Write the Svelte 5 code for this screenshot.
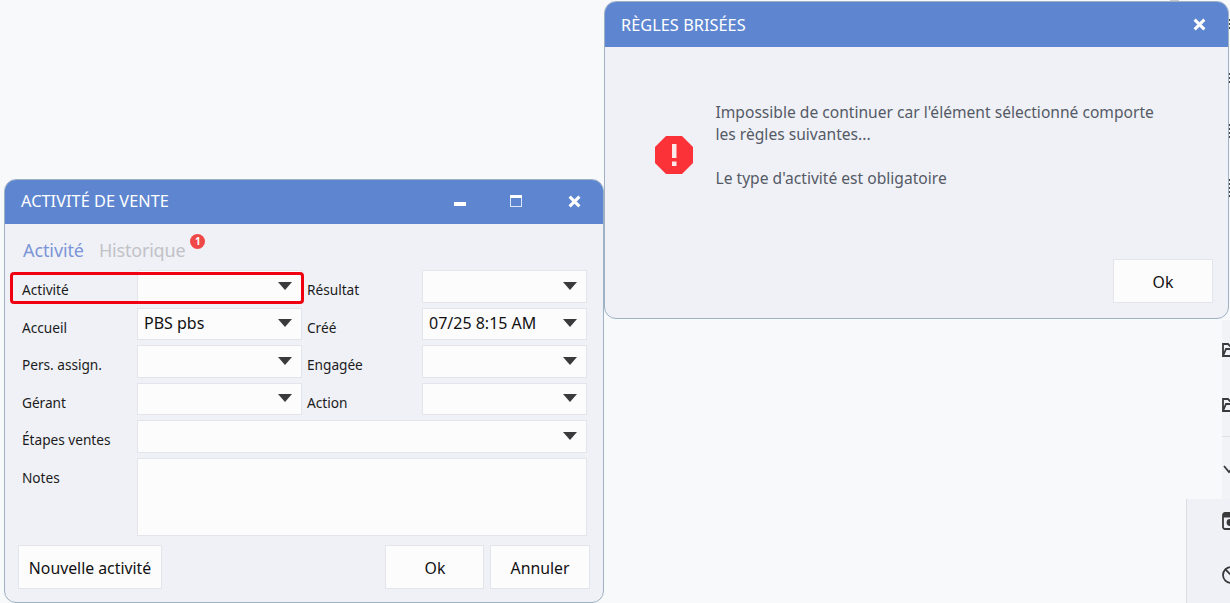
<script>
  const rows = [
    [{ label: 'Activité' }, { label: 'Résultat' }],
    [{ label: 'Accueil', value: 'PBS pbs' }, { label: 'Créé', value: '07/25 8:15 AM' }],
    [{ label: 'Pers. assign.' }, { label: 'Engagée' }],
    [{ label: 'Gérant' }, { label: 'Action' }]
  ];
  const heights = [33, 32, 33, 32, 33];
</script>

<main class="desktop">
  <aside class="rail-top">
    <i></i><i></i><i></i><i></i>
  </aside>
  <span class="top-stub"></span>
  <aside class="rail">
    <div class="rail-light">
      <svg class="rail-icon" style="top: 22px" viewBox="0 0 18 16"><path d="M1 14V2h5l2 2h7v3M1 14h14l2-7H4z" /></svg>
      <svg class="rail-icon" style="top: 77px" viewBox="0 0 18 16"><path d="M1 14V2h5l2 2h7v3M1 14h14l2-7H4z" /></svg>
      <span class="rail-line"></span>
      <svg class="rail-icon" style="top: 142px" viewBox="0 0 18 16"><path d="M2 4l5 6 5-6" /></svg>
    </div>
    <div class="rail-dark">
      <svg class="rail-icon" style="top: 13px" viewBox="0 0 18 18"><rect x="1" y="1" width="16" height="16" rx="2" /><path d="M1 3.5h16" stroke-width="4" /><circle cx="8" cy="10.5" r="2.5" fill="currentColor" /></svg>
      <svg class="rail-icon" style="top: 67px" viewBox="0 0 18 18"><circle cx="9" cy="9" r="8" /><path d="M3 3l12 12" /></svg>
    </div>
  </aside>

  <section class="window sale">
    <header class="titlebar">
      <h2>ACTIVITÉ DE VENTE</h2>
      <div class="controls">
        <svg class="min" viewBox="0 0 12 4"><rect width="12" height="4" /></svg>
        <svg class="max" viewBox="0 0 12 12"><rect x="0.5" y="0.5" width="11" height="11" fill="none" stroke="currentColor" opacity="0.8" /><rect width="12" height="3" /></svg>
        <svg class="close" viewBox="0 0 12 12"><path d="M1.5 1.5l9 9M10.5 1.5l-9 9" /></svg>
      </div>
    </header>
    <div class="body">
      <nav class="tabs">
        <span class="tab active">Activité</span>
        <span class="tab">Historique<b class="badge">1</b></span>
      </nav>
      <div class="form">
        {#each rows as row, i}
          <div class="row" style="height: {heights[i]}px">
            {#each row as f}
              <span class="label">{f.label}</span>
              <div class="select">
                <span>{f.value ?? ''}</span>
                <span class="caret"></span>
              </div>
            {/each}
          </div>
        {/each}
        <div class="row" style="height: {heights[4]}px">
          <span class="label">Étapes ventes</span>
          <div class="select wide"><span></span><span class="caret"></span></div>
        </div>
        <div class="row notes">
          <span class="label">Notes</span>
          <div class="area"></div>
        </div>
      </div>
      <footer class="actions">
        <button class="new">Nouvelle activité</button>
        <button class="std ok">Ok</button>
        <button class="std">Annuler</button>
      </footer>
      <span class="invalid"></span>
    </div>
  </section>

  <section class="window rules">
    <header class="titlebar">
      <h2>RÈGLES BRISÉES</h2>
      <div class="controls">
        <svg class="close" viewBox="0 0 12 12"><path d="M1.5 1.5l9 9M10.5 1.5l-9 9" /></svg>
      </div>
    </header>
    <div class="message">
      <svg class="stop" viewBox="0 0 38 38">
        <path d="M11 0h16l11 11v16L27 38H11L0 27V11z" fill="#fb3237" />
        <rect x="17" y="8" width="4.5" height="14" fill="#fde9ea" />
        <rect x="17" y="25.5" width="4.5" height="4.5" fill="#fde9ea" />
      </svg>
      <div class="text">
        <p>Impossible de continuer car l'élément sélectionné comporte<br />les règles suivantes...</p>
        <p>Le type d'activité est obligatoire</p>
      </div>
    </div>
    <footer class="rules-foot">
      <button class="std">Ok</button>
    </footer>
  </section>
</main>

<style>
  :global(body) {
    margin: 0;
    background: #f8f9fb;
  }

  .desktop {
    position: relative;
    width: 1230px;
    height: 603px;
    overflow: hidden;
    font-family: "Noto Sans", "Open Sans", sans-serif;
    color: #111;
  }

  /* windows sit on a free canvas */
  .window {
    position: absolute;
    box-sizing: border-box;
    display: flex;
    flex-direction: column;
    background: #eff1f6;
    border: 1px solid #9fb2c4;
    border-radius: 12px;
    overflow: hidden;
  }
  .sale { left: 4px; top: 179px; width: 600px; height: 424px; }
  .rules { left: 604px; top: 1px; width: 625px; height: 318px; }

  .titlebar {
    flex: none;
    display: flex;
    align-items: center;
    justify-content: space-between;
    height: 44px;
    padding: 0 15px 0 16px;
    background: #5e86d0;
    color: #fff;
  }
  .rules .titlebar { height: 45px; }
  .sale .titlebar { padding-bottom: 2px; box-sizing: border-box; }
  h2 {
    margin: 0;
    font-size: 16.3px;
    font-weight: 400;
    letter-spacing: 0.05px;
  }
  .controls { display: flex; align-items: center; gap: 45px; padding-right: 7px; }
  .controls svg { display: block; color: #fff; fill: currentColor; }
  .min { width: 12px; height: 4px; margin-top: 6px; }
  .max { width: 12px; height: 12px; margin: 0 1px 0 -1px; }
  .close { width: 13px; height: 13px; stroke: #fff; stroke-width: 2.8; fill: none; }
  .controls .close { fill: none; }

  .body {
    position: relative;
    flex: 1;
    display: flex;
    flex-direction: column;
    padding: 0 13px 13px;
  }
  .tabs {
    display: flex;
    gap: 15px;
    height: 46px;
    padding: 14px 0 0 5px;
    box-sizing: border-box;
    font-size: 18px;
    letter-spacing: -0.1px;
  }
  .tab { position: relative; color: #c2c2c6; }
  .tab + .tab { letter-spacing: -0.2px; }
  .tab.active { color: #7c95d6; }
  .badge {
    position: absolute;
    top: -4px;
    right: -20px;
    width: 15px;
    height: 15px;
    border-radius: 50%;
    background: #f04747;
    color: #fff;
    font-size: 10px;
    font-weight: 700;
    line-height: 15px;
    text-align: center;
    letter-spacing: 0;
  }

  .form { display: flex; flex-direction: column; gap: 5px; }
  .row {
    display: grid;
    grid-template-columns: 119px 165px 120px 165px;
  }
  .label {
    padding: 11px 0 0 4px;
    font-size: 13.7px;
    line-height: 18px;
    letter-spacing: -0.03px;
    color: #1c1c1c;
  }
  .row .label:nth-child(3) { padding-left: 5px; }
  .select, .area {
    box-sizing: border-box;
    background: #fcfcfd;
    border: 1px solid #e3e5ea;
  }
  .select {
    display: flex;
    align-items: center;
    justify-content: space-between;
    padding: 0 9px 2px 6px;
    font-size: 16px;
  }
  .caret {
    width: 0;
    height: 0;
    border: 7px solid transparent;
    border-top: 8px solid #3a3a3c;
    border-bottom: 0;
  }
  .wide, .area { grid-column: 2 / 5; }
  .notes { height: 78px; }
  .notes .label { padding-top: 11px; }

  .actions {
    display: flex;
    align-items: stretch;
    gap: 6px;
    height: 44px;
    margin-top: 9px;
  }
  button {
    box-sizing: border-box;
    background: #fcfcfd;
    border: 1px solid #e3e5ea;
    font: inherit;
    font-size: 15.8px;
    color: #111;
    padding: 1px 0 0;
  }
  .new { width: 144px; margin-right: auto; }
  .std { width: 100px; }
  .ok { width: 99px; padding-left: 1px; }

  .invalid {
    position: absolute;
    left: 5px;
    top: 48px;
    width: 294px;
    height: 32px;
    box-sizing: border-box;
    border: 3px solid #f00010;
    border-radius: 4px;
  }

  .message {
    flex: 1;
    display: flex;
    padding: 54px 0 0 50px;
    font-size: 15.6px;
    line-height: 22px;
    color: #555a66;
  }
  .stop { flex: none; width: 38px; height: 38px; margin: 35px 23px 0 0; }
  .text { margin-left: -0.5px; }
  .text p { margin: 0 0 22px; }
  .rules-foot {
    display: flex;
    justify-content: flex-end;
    height: 44px;
    padding: 0 15px 15px;
    margin-top: -1px;
  }

  .top-stub {
    position: absolute;
    left: 1170px;
    top: 0;
    width: 9px;
    height: 2px;
    background: #c8c9cc;
  }
  .rail-top {
    position: absolute;
    right: 0;
    top: 0;
    width: 1px;
    height: 200px;
  }
  .rail-top i {
    position: absolute;
    left: 0;
    width: 1px;
    height: 10px;
    background: repeating-linear-gradient(#444 0 2px, transparent 2px 4px);
  }
  .rail-top i:nth-child(1) { top: 19px; }
  .rail-top i:nth-child(2) { top: 73px; }
  .rail-top i:nth-child(3) { top: 124px; height: 16px; }
  .rail-top i:nth-child(4) { top: 179px; height: 18px; }

  .rail { position: absolute; left: 0; top: 320px; width: 1230px; height: 283px; }
  .rail-light {
    position: absolute;
    left: 1222px;
    top: 0;
    width: 8px;
    height: 179px;
    background: #f2f3f7;
  }
  .rail-line {
    position: absolute;
    left: 0;
    right: 0;
    top: 116px;
    height: 1px;
    background: #dfe1e6;
  }
  .rail-dark {
    position: absolute;
    left: 1186px;
    top: 179px;
    width: 44px;
    height: 104px;
    box-sizing: border-box;
    background: #eff1f6;
    border-left: 1px solid #dcdee3;
  }
  .rail-dark .rail-icon { left: 35px; width: 18px; height: 18px; }
  .rail-icon {
    position: absolute;
    left: 0;
    width: 18px;
    height: 16px;
    fill: none;
    stroke: #3a3a3c;
    stroke-width: 1.8;
    color: #3a3a3c;
  }
</style>
